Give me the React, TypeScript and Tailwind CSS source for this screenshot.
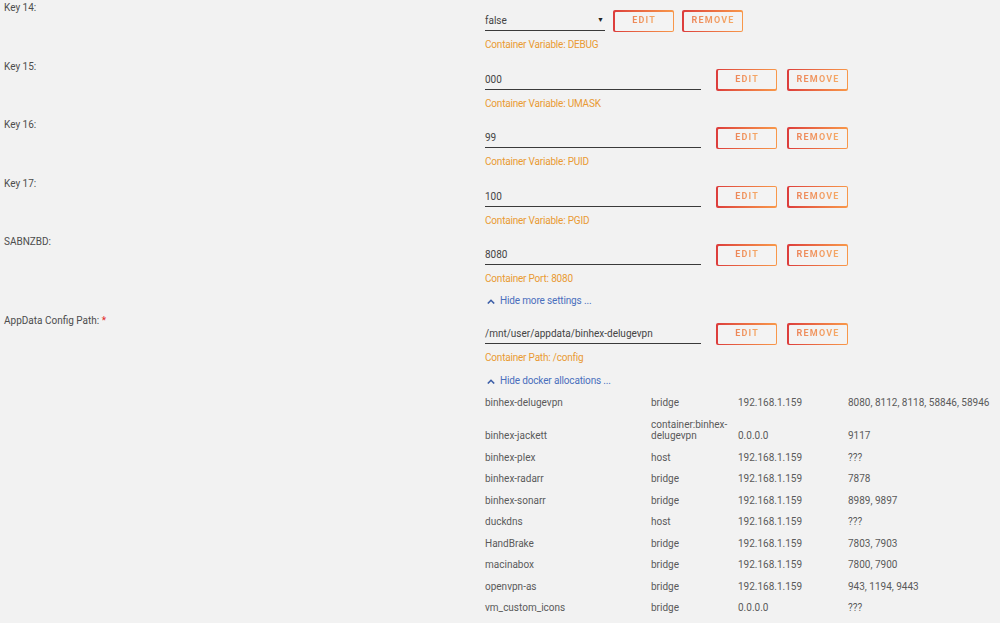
import React from "react";

const font = { fontFamily: "Roboto, 'Liberation Sans', sans-serif" };

const fields = [
  { label: "Key 15:", value: "000", caption: "Container Variable: UMASK" },
  { label: "Key 16:", value: "99", caption: "Container Variable: PUID" },
  { label: "Key 17:", value: "100", caption: "Container Variable: PGID" },
];

const allocations = [
  { name: "binhex-delugevpn", net: "bridge", ip: "192.168.1.159", ports: "8080, 8112, 8118, 58846, 58946" },
  { name: "binhex-jackett", net: "container:binhex-delugevpn", ip: "0.0.0.0", ports: "9117" },
  { name: "binhex-plex", net: "host", ip: "192.168.1.159", ports: "???" },
  { name: "binhex-radarr", net: "bridge", ip: "192.168.1.159", ports: "7878" },
  { name: "binhex-sonarr", net: "bridge", ip: "192.168.1.159", ports: "8989, 9897" },
  { name: "duckdns", net: "host", ip: "192.168.1.159", ports: "???" },
  { name: "HandBrake", net: "bridge", ip: "192.168.1.159", ports: "7803, 7903" },
  { name: "macinabox", net: "bridge", ip: "192.168.1.159", ports: "7800, 7900" },
  { name: "openvpn-as", net: "bridge", ip: "192.168.1.159", ports: "943, 1194, 9443" },
  { name: "vm_custom_icons", net: "bridge", ip: "0.0.0.0", ports: "???" },
];

function Btn({ label }: { label: string }) {
  return (
    <div className="w-[61px] h-[22px] p-[1.5px] rounded-[2px] bg-gradient-to-r from-[#dc3c3c] to-[#f8984a]">
      <div className="w-full h-full bg-[#f3f3f3] rounded-[1px] flex items-center justify-center">
        <span className="text-[9px] font-bold tracking-[1.2px] pl-[1.2px] bg-gradient-to-r from-[#ec8458] to-[#f5aa66] bg-clip-text text-transparent">
          {label}
        </span>
      </div>
    </div>
  );
}

function Label({ children }: { children: React.ReactNode }) {
  return <div className="w-[485px] shrink-0 pl-[4px] text-[10px] leading-[14px] text-[#4d4d4d]">{children}</div>;
}

function Caption({ children }: { children: React.ReactNode }) {
  return <div className="mt-[6px] text-[10px] leading-[14px] tracking-[-0.2px] text-[#e99a32]">{children}</div>;
}

function InputRow({ value }: { value: string }) {
  return (
    <div className="mt-[9px] h-[22px] flex items-center">
      <div className="w-[216px] h-[20px] border-b border-[#3a3a3a] text-[10px] leading-[19px] text-[#444]">{value}</div>
      <div className="ml-[15px] flex gap-[10px]">
        <Btn label="EDIT" />
        <Btn label="REMOVE" />
      </div>
    </div>
  );
}

function Toggle({ text }: { text: string }) {
  return (
    <div className="flex items-center gap-[5px] text-[10px] leading-[14px] tracking-[-0.15px] text-[#4a6fbd] pl-[2px]">
      <svg viewBox="0 0 10 6" className="w-[8px] h-[5px]" fill="none" stroke="#3d5fa8" strokeWidth="2">
        <polyline points="1,5.5 5,1.5 9,5.5" />
      </svg>
      {text}
    </div>
  );
}

export default function App() {
  return (
    <div className="min-h-screen w-full bg-[#f2f2f2] pt-[1px] overflow-hidden" style={font}>
      {/* Key 14 - select */}
      <div className="flex pb-[7.5px]">
        <Label>Key 14:</Label>
        <div>
          <div className="mt-[9px] h-[22px] flex items-center">
            <div className="w-[120px] h-[20px] border-b border-[#3a3a3a] flex items-center justify-between text-[10px] text-[#444]">
              <span className="leading-[19px]">false</span>
              <span className="text-[7px] text-[#222] pr-[1px]">▼</span>
            </div>
            <div className="ml-[8px] flex gap-[8px]">
              <Btn label="EDIT" />
              <Btn label="REMOVE" />
            </div>
          </div>
          <Caption>Container Variable: DEBUG</Caption>
        </div>
      </div>

      {fields.map((f) => (
        <div key={f.label} className="flex pb-[7.5px]">
          <Label>{f.label}</Label>
          <div>
            <InputRow value={f.value} />
            <Caption>{f.caption}</Caption>
          </div>
        </div>
      ))}

      <div className="flex">
        <Label>SABNZBD:</Label>
        <div>
          <InputRow value="8080" />
          <Caption>Container Port: 8080</Caption>
          <div className="mt-[8px]">
            <Toggle text="Hide more settings ..." />
          </div>
        </div>
      </div>

      <div className="flex mt-[6px]">
        <Label>
          AppData Config Path: <span className="text-[#e22828]">*</span>
        </Label>
        <div className="flex-1">
          <InputRow value="/mnt/user/appdata/binhex-delugevpn" />
          <Caption>Container Path: /config</Caption>
          <div className="mt-[9px]">
            <Toggle text="Hide docker allocations ..." />
          </div>
          <div className="mt-[4px] text-[10px] text-[#5a5a5a]">
            {allocations.map((a) => (
              <div key={a.name} className="grid grid-cols-[166px_87px_110px_1fr] items-end py-[5px] leading-[11.5px]">
                <div>{a.name}</div>
                <div className="pr-[6px]">{a.net}</div>
                <div>{a.ip}</div>
                <div className="whitespace-nowrap">{a.ports}</div>
              </div>
            ))}
          </div>
        </div>
      </div>
    </div>
  );
}
